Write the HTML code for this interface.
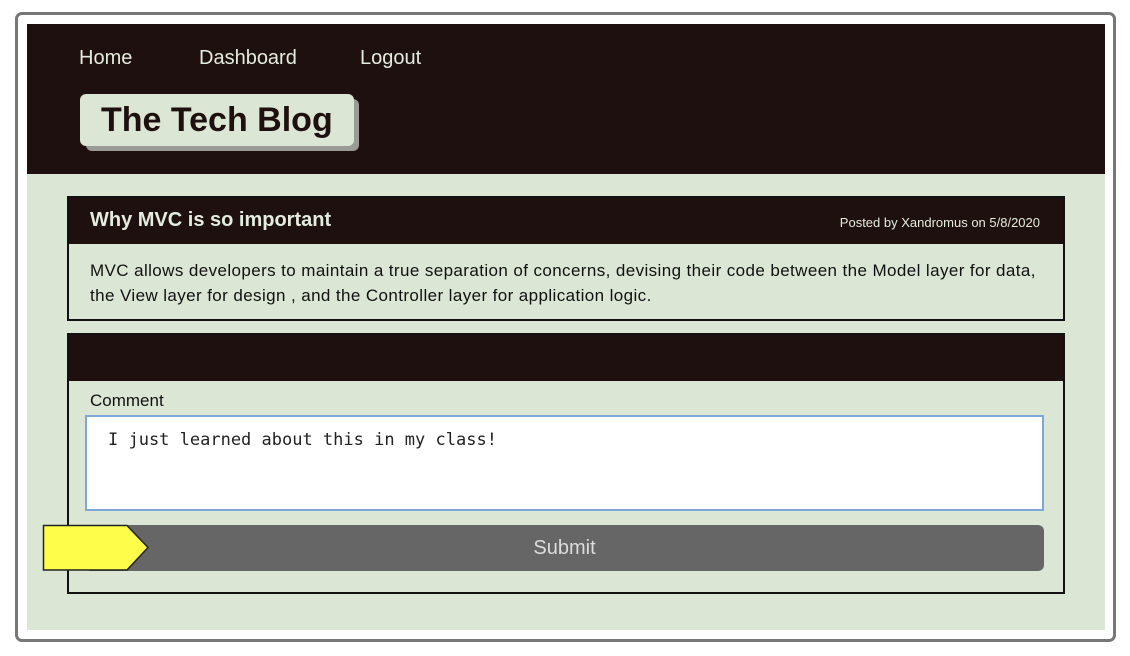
<!DOCTYPE html>
<html><head><meta charset="utf-8"><style>
*{margin:0;padding:0;box-sizing:border-box}
body{width:1130px;height:656px;background:#fff;position:relative;overflow:hidden;font-family:"Liberation Sans",sans-serif}
.frame{position:absolute;left:15px;top:12px;width:1101px;height:630px;border:3px solid #777;border-radius:7px}
.inner{position:absolute;left:27px;top:24px;width:1078px;height:606px;background:#dce6d4}
.hdr{position:absolute;left:27px;top:24px;width:1078px;height:150px;background:#1e100e}
.nav{position:absolute;top:47px;color:#e4ecdf;font-size:20px}
.tshadow{position:absolute;left:86px;top:99px;width:273px;height:52px;background:#9a9a96;border-radius:6px}
.title{position:absolute;left:80px;top:94px;width:274px;height:52px;background:#dce6d4;border-radius:6px;font-weight:bold;font-size:34px;color:#1e100e;line-height:52px;padding-left:21px}
.card{position:absolute;left:67px;width:998px;border:2px solid #111;background:#dce6d4}
.ch{background:#1e100e;height:46px;position:relative}
.ct{position:absolute;left:21px;top:11px;color:#e4ecdf;font-size:20px;font-weight:bold}
.cm{position:absolute;right:23px;top:17px;color:#e4ecdf;font-size:13px}
.cb{padding:15px 21px 15px 21px;font-size:17px;letter-spacing:0.4px;line-height:25px;color:#111}
.ta{position:absolute;left:85px;top:415px;width:959px;height:96px;background:#fff;border:2px solid #7da7d9;font-family:"DejaVu Sans Mono","Liberation Mono",monospace;font-size:17px;padding:13px 21px;color:#222}
.btn{position:absolute;left:85px;top:525px;width:959px;height:46px;background:#666;border-radius:6px;color:#ddd;font-size:20px;text-align:center;line-height:46px}
</style></head><body>
<div class="frame"></div>
<div class="inner"></div>
<div class="hdr"></div>
<div class="nav" style="left:79px">Home</div>
<div class="nav" style="left:199px">Dashboard</div>
<div class="nav" style="left:360px">Logout</div>
<div class="tshadow"></div>
<div class="title">The Tech Blog</div>
<div class="card" style="top:196px;height:125px">
<div class="ch"><div class="ct">Why MVC is so important</div><div class="cm">Posted by Xandromus on 5/8/2020</div></div>
<div class="cb" style="padding-top:14px">MVC allows developers to maintain a true separation of concerns, devising their code between the Model layer for data, the View layer for design , and the Controller layer for application logic.</div>
</div>
<div class="card" style="top:333px;height:261px">
<div class="ch"></div>
<div style="position:absolute;left:21px;top:56px;font-size:17px;color:#111">Comment</div>
</div>
<div class="ta">I just learned about this in my class!</div>
<div class="btn">Submit</div>
<svg style="position:absolute;left:40px;top:522px" width="115" height="54"><polygon points="3.5,3.5 87,3.5 108,25.5 87,48 3.5,48" fill="#fdfd4a" stroke="#222" stroke-width="1.5"/></svg>
</body></html>
